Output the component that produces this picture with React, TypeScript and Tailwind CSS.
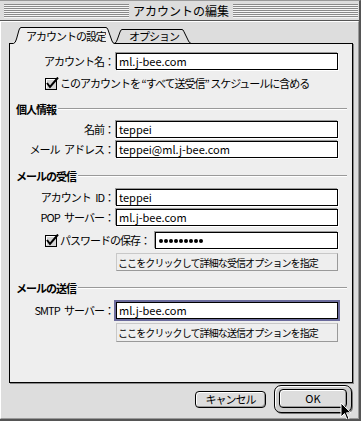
import React from 'react';

const JP = '"Noto Sans CJK JP", "Liberation Sans", sans-serif';

function Stripes() {
  return (
    <div className="flex-1 h-[14px] bg-[repeating-linear-gradient(to_bottom,#8a8a8a_0px,#8a8a8a_1px,#f6f6f6_1px,#f6f6f6_2px)]" />
  );
}

function CheckBox() {
  return (
    <svg width="14" height="13" viewBox="0 0 14 13" className="shrink-0">
      <rect x="0.5" y="1.5" width="11" height="11" fill="#d4d4d4" stroke="#000" />
      <path d="M1.5 11 V2.5 H10.5" fill="none" stroke="#fff" />
      <path d="M2 6 L5 10 L13 0.5" fill="none" stroke="#000" strokeWidth="2" />
    </svg>
  );
}

interface FieldProps {
  label: string;
  value: string;
  focus?: boolean;
}

function Field({ label, value, focus }: FieldProps) {
  return (
    <div className="flex items-center h-[17px]">
      <span className="w-[104px] text-right text-[11px] tracking-[-1px] leading-[17px] shrink-0 whitespace-pre">{label}</span>
      <div
        className={
          focus
            ? 'ml-[2px] flex-1 h-[17px] bg-white border border-black pl-[2px] text-[11px] leading-[15px] shadow-[0_0_0_2px_#6b6b9c]'
            : 'ml-[2px] flex-1 h-[17px] bg-white border border-black pl-[2px] text-[11px] leading-[15px] shadow-[-1px_-1px_0_#9a9a9a,1px_1px_0_#fff]'
        }
      >
        {value}
      </div>
    </div>
  );
}

function Heading({ text }: { text: string }) {
  return (
    <div className="flex items-center h-[14px] pl-[6px] pr-[5px]">
      <span className="text-[11px] font-bold tracking-[-1px] leading-[14px]">{text}</span>
      <div className="flex-1 ml-[2px] border-t border-[#999999] border-b border-b-white" />
    </div>
  );
}

function OptionButton({ text, h }: { text: string; h: string }) {
  return (
    <div className="flex">
      <div className="w-[106px] shrink-0" />
      <div
        className={`flex-1 ${h} bg-[#eeeeee] border border-[#c8c8c8] border-r-[#999999] border-b-[#999999] pl-[1px] text-[10px] tracking-[-0.9px] flex items-center`}
      >
        {text}
      </div>
    </div>
  );
}

export default function App() {
  return (
    <div
      className="w-[361px] h-[421px] relative overflow-hidden flex flex-col bg-[#dddddd] border-t border-[#999999] border-r-2 border-r-[#555555] border-b-2 border-b-[#555555] text-black"
      style={{ fontFamily: JP }}
    >
      {/* Title bar */}
      <div className="h-[20px] flex items-center gap-[3px] pl-[4px] pr-[1px] border-b border-[#555555] bg-[#dddddd]">
        <Stripes />
        <span className="text-[12px] leading-[14px] px-[1px]">アカウントの編集</span>
        <Stripes />
      </div>

      {/* Body */}
      <div className="flex-1 flex flex-col border-t border-white border-l border-l-white border-r border-r-[#999999] border-b border-b-[#999999] pl-[8px] pr-[5px] pt-[5px]">
        {/* Tabs */}
        <div className="flex items-end h-[17px] -mb-px pl-[3px] relative z-10">
          <div className="flex h-[17px]">
            <svg width="9" height="17" viewBox="0 0 9 17">
              <path d="M0 17 V16 H1.5 Q3.5 16 4.5 12 L7 3 Q7.8 0 9 0 V17 Z" fill="#eeeeee" />
              <path d="M0 16.5 H1.5 Q3.5 16 4.5 12 L7 3 Q7.8 0.5 9 0.5" fill="none" stroke="#000" />
            </svg>
            <div className="h-[17px] bg-[#eeeeee] border-t border-black pl-[5px] pr-0 text-[11px] tracking-[-1px] leading-[16px]">
              アカウントの設定
            </div>
            <svg width="9" height="17" viewBox="0 0 9 17">
              <path d="M0 0 Q1.2 0 2 2.5 L6 14 Q7 17 9 17 H0 Z" fill="#eeeeee" />
              <path d="M0 0.5 Q1.2 0.5 2 2.8 L6 14 Q6.8 16.5 9 16.5" fill="none" stroke="#000" />
            </svg>
          </div>
          <div className="flex h-[14px] mb-px">
            <svg width="7" height="14" viewBox="0 0 7 14">
              <path d="M0 14 Q1.5 13 2.5 10 L5 3 Q5.8 0 7 0 V14 Z" fill="#dddddd" />
              <path d="M0.3 14 Q1.5 13 2.5 10 L5 3 Q5.8 0.5 7 0.5" fill="none" stroke="#000" />
            </svg>
            <div className="h-[14px] bg-[#dddddd] border-t border-black pl-[7px] pr-[3px] text-[11px] tracking-[-1px] leading-[13px]">
              オプション
            </div>
            <svg width="9" height="14" viewBox="0 0 9 14">
              <path d="M0 0 Q1.2 0 2 2.5 L6.5 12 Q7.3 14 9 14 H0 Z" fill="#dddddd" />
              <path d="M0 0.5 Q1.2 0.5 2 2.8 L6.5 12 Q7.2 13.8 8.7 14" fill="none" stroke="#000" />
            </svg>
          </div>
        </div>

        {/* Panel */}
        <div className="h-[340px] bg-[#eeeeee] border border-black shadow-[1px_1px_0_#888888] flex flex-col pr-[14px]">
          <div className="mt-[9px]">
            <Field label="アカウント名：" value="ml.j-bee.com" />
          </div>
          <div className="mt-[6px] h-[14px] flex items-center pl-[35px] gap-[1px]">
            <CheckBox />
            <span className="text-[11px] tracking-[-1px] leading-[14px] whitespace-pre">
              {'このアカウントを \u201cすべて送受信\u201d スケジュールに含める'}
            </span>
          </div>

          <div className="mt-[12px] -mr-[14px]">
            <Heading text="個人情報" />
          </div>
          <div className="mt-[5px]">
            <Field label="名前：" value="teppei" />
          </div>
          <div className="mt-[3px]">
            <Field label={'メール\u2002アドレス：'} value="teppei@ml.j-bee.com" />
          </div>

          <div className="mt-[11px] -mr-[14px]">
            <Heading text="メールの受信" />
          </div>
          <div className="mt-[6px]">
            <Field label={'アカウント\u2002ID：'} value="teppei" />
          </div>
          <div className="mt-[3px]">
            <Field label={'POP\u2002サーバー：'} value="ml.j-bee.com" />
          </div>
          <div className="mt-[6px] h-[17px] flex items-center pl-[35px]">
            <CheckBox />
            <span className="ml-[1px] text-[11px] tracking-[-1px] leading-[17px] whitespace-nowrap">パスワードの保存：</span>
            <div className="ml-[5px] flex-1 h-[17px] bg-white border border-black pl-[3px] flex items-center gap-[1px] shadow-[-1px_-1px_0_#9a9a9a,1px_1px_0_#fff]">
              {Array.from({ length: 9 }).map((_, i) => (
                <span key={i} className="w-[4px] h-[4px] rounded-full bg-black" />
              ))}
            </div>
          </div>
          <div className="mt-[4px]">
            <OptionButton text="ここをクリックして詳細な受信オプションを指定" h="h-[18px]" />
          </div>

          <div className="mt-[10px] -mr-[14px]">
            <Heading text="メールの送信" />
          </div>
          <div className="mt-[7px]">
            <Field label={'SMTP\u2002サーバー：'} value="ml.j-bee.com" focus />
          </div>
          <div className="mt-[4px]">
            <OptionButton text="ここをクリックして詳細な送信オプションを指定" h="h-[19px]" />
          </div>
        </div>

        {/* Dialog buttons */}
        <div className="mt-[2px] h-[28px] flex items-center justify-end gap-[8px] pr-[1px]">
          <div className="w-[71px] h-[17px] rounded-[4px] border border-black bg-[#dddddd] shadow-[inset_1px_1px_0_#fff,inset_-1px_-1px_0_#999999] flex items-center justify-center text-[11px] tracking-[-1px]">
            キャンセル
          </div>
          <div className="w-[78px] h-[28px] rounded-[7px] border border-black bg-[#cccccc] shadow-[inset_1px_1px_0_#fff,1px_1px_0_#777777] px-[4px] pt-[3px] pb-[4px] flex">
            <div className="flex-1 rounded-[4px] border border-black bg-[#dddddd] shadow-[inset_1px_1px_0_#fff,inset_-1px_-1px_0_#999999] flex items-center justify-center text-[11px]">
              OK
            </div>
          </div>
        </div>
      </div>

      {/* Mouse pointer */}
      <svg className="absolute left-[340px] top-[401px]" width="12" height="19" viewBox="0 0 12 19">
        <path d="M1 1 V15 L4.5 11.5 L7 17.5 L9 16.5 L6.5 10.8 H11 Z" fill="#000" stroke="#fff" strokeWidth="1" />
      </svg>
    </div>
  );
}
